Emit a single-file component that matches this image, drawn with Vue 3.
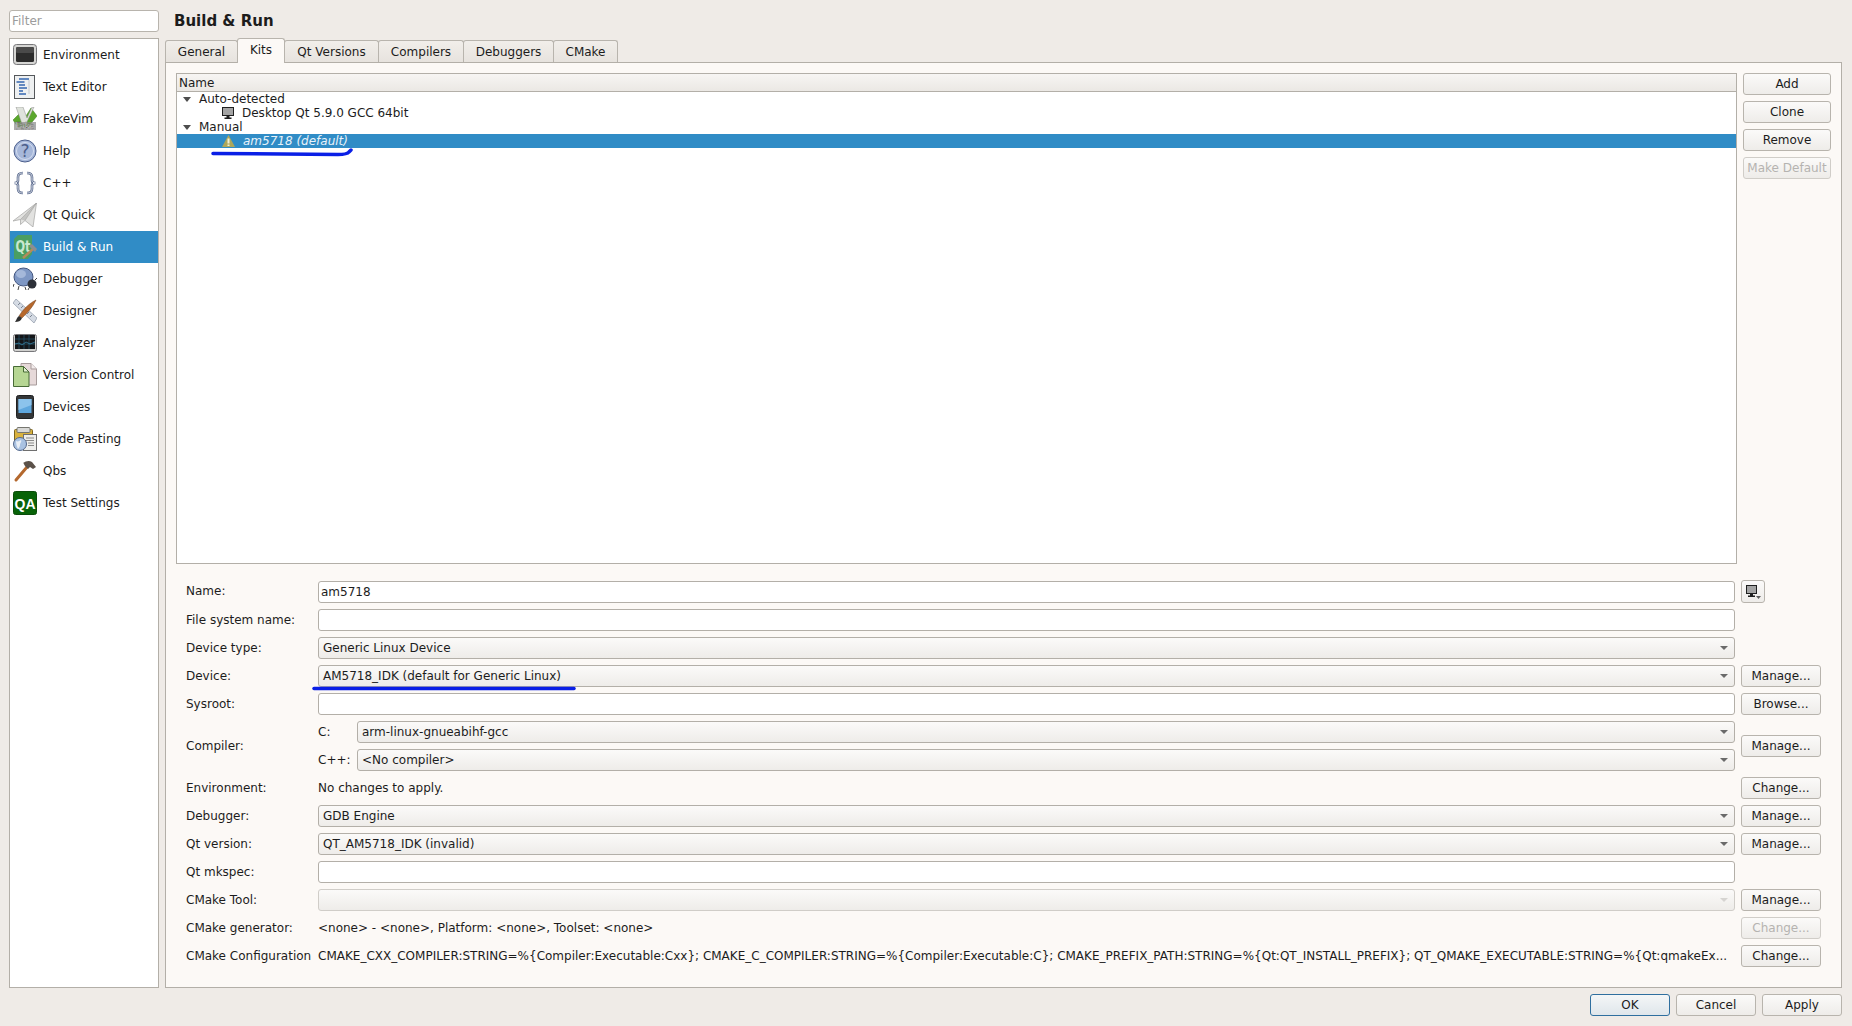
<script setup>
const navItems = [
  { id: 'env', label: 'Environment' },
  { id: 'text', label: 'Text Editor' },
  { id: 'vim', label: 'FakeVim' },
  { id: 'help', label: 'Help' },
  { id: 'cpp', label: 'C++' },
  { id: 'quick', label: 'Qt Quick' },
  { id: 'build', label: 'Build & Run', active: true },
  { id: 'debug', label: 'Debugger' },
  { id: 'design', label: 'Designer' },
  { id: 'analyze', label: 'Analyzer' },
  { id: 'vcs', label: 'Version Control' },
  { id: 'devices', label: 'Devices' },
  { id: 'paste', label: 'Code Pasting' },
  { id: 'qbs', label: 'Qbs' },
  { id: 'qa', label: 'Test Settings' }
]
const tabs = [
  { label: 'General', width: 73 },
  { label: 'Kits', width: 48 },
  { label: 'Qt Versions', width: 95 },
  { label: 'Compilers', width: 86 },
  { label: 'Debuggers', width: 91 },
  { label: 'CMake', width: 65 }
]
const sideButtons = [
  { label: 'Add' }, { label: 'Clone' }, { label: 'Remove' }, { label: 'Make Default', disabled: true }
]
const rows = [
  { label: 'File system name:', kind: 'input', value: '' },
  { label: 'Device type:', kind: 'combo', value: 'Generic Linux Device' },
  { label: 'Device:', kind: 'combo', value: 'AM5718_IDK (default for Generic Linux)', btn: 'Manage...' },
  { label: 'Sysroot:', kind: 'input', value: '', btn: 'Browse...' },
  { label: 'Compiler:', kind: 'compiler', btn: 'Manage...' },
  { label: 'Environment:', kind: 'text', value: 'No changes to apply.', btn: 'Change...' },
  { label: 'Debugger:', kind: 'combo', value: 'GDB Engine', btn: 'Manage...' },
  { label: 'Qt version:', kind: 'combo', value: 'QT_AM5718_IDK (invalid)', btn: 'Manage...' },
  { label: 'Qt mkspec:', kind: 'input', value: '' },
  { label: 'CMake Tool:', kind: 'combo', value: '', disabled: true, btn: 'Manage...' },
  { label: 'CMake generator:', kind: 'text', value: '<none> - <none>, Platform: <none>, Toolset: <none>', btn: 'Change...', btnDisabled: true },
  { label: 'CMake Configuration', kind: 'text', value: 'CMAKE_CXX_COMPILER:STRING=%{Compiler:Executable:Cxx}; CMAKE_C_COMPILER:STRING=%{Compiler:Executable:C}; CMAKE_PREFIX_PATH:STRING=%{Qt:QT_INSTALL_PREFIX}; QT_QMAKE_EXECUTABLE:STRING=%{Qt:qmakeEx...', btn: 'Change...' }
]
</script>

<template>
  <div class="app">
    <div class="top">
      <aside class="sidebar">
        <div class="filter">Filter</div>
        <ul class="nav">
          <li v-for="it in navItems" :key="it.id" class="nav-item" :class="{ active: it.active }">
            <svg class="nav-icon" viewBox="0 0 24 24" width="24" height="24">
              <template v-if="it.id === 'env'">
                <rect x="0.500" y="1.500" width="23" height="20" rx="3" fill="#d6d6d4" stroke="#77777a" />
                <rect x="3" y="4" width="18" height="15" rx="1.500" fill="#2c2c2c" />
                <rect x="3" y="4" width="18" height="6" rx="1.500" fill="#4a4a4a" />
              </template>
              <template v-else-if="it.id === 'text'">
                <rect x="1.500" y="0.500" width="20" height="23" fill="#eef0f1" stroke="#55585c" />
                <path d="M6 4h10M3.500 7h8M6 10h6M6 13h8M6 16h4M6 19h7" stroke="#3566b0" stroke-width="1.300" fill="none" />
                <path d="M16 5v14" stroke="#c5cad0" />
              </template>
              <template v-else-if="it.id === 'vim'">
                <path d="M0 13 8 5l5 4 5-8 6 8-9 11H5z" fill="#5aa72c" stroke="#3c7c1c" stroke-width="0.500" />
                <path d="M3 0h7l4 11 5-11h2l-8 17H9z" fill="#dfe3dc" stroke="#8c8c8c" stroke-width="0.500" />
                <rect x="1" y="15" width="22" height="8" fill="#8a8a8a" opacity="0.700" />
                <text x="12" y="22.300" font-size="8.500" text-anchor="middle" font-family="'DejaVu Sans', sans-serif" fill="#fff" stroke="#555" stroke-width="0.300">Fake</text>
              </template>
              <template v-else-if="it.id === 'help'">
                <circle cx="12" cy="12" r="11" fill="#a6b7d9" stroke="#4c5f8c" />
                <circle cx="12" cy="12" r="8.500" fill="none" stroke="#d5def0" />
                <text x="12" y="18" font-size="17" text-anchor="middle" font-family="'DejaVu Sans', sans-serif" fill="#4c5f8c">?</text>
              </template>
              <template v-else-if="it.id === 'cpp'">
                <path d="M10 2C6 2 5 3.500 5 6.500v3C5 11 3.500 12 1.500 12c2 0 3.500 1 3.500 2.500v3c0 3 1 4.500 5 4.500M14 2c4 0 5 1.500 5 4.500v3c0 1.500 1.500 2.500 3.500 2.500-2 0-3.500 1-3.500 2.500v3c0 3-1 4.500-5 4.500" fill="none" stroke="#56668a" stroke-width="2.600" />
                <path d="M10 2C6 2 5 3.500 5 6.500v3C5 11 3.500 12 1.500 12c2 0 3.500 1 3.500 2.500v3c0 3 1 4.500 5 4.500M14 2c4 0 5 1.500 5 4.500v3c0 1.500 1.500 2.500 3.500 2.500-2 0-3.500 1-3.500 2.500v3c0 3-1 4.500-5 4.500" fill="none" stroke="#e4e8f0" stroke-width="1" />
              </template>
              <template v-else-if="it.id === 'quick'">
                <path d="M0 18 23.500 0 20 24 12 17.500 7.500 21.500 7.500 16.500z" fill="#e2e2e0" stroke="#a4a4a2" stroke-width="0.700" />
                <path d="M7.500 16.500 23.500 0 12 17.500" fill="#c4c4c2" stroke="#9a9a98" stroke-width="0.500" />
              </template>
              <template v-else-if="it.id === 'build'">
                <path d="M5 0h14v19l-4 5H1V4z" fill="#4a9e62" />
                <text x="2.500" y="17" font-size="15" font-weight="bold" textLength="15" lengthAdjust="spacingAndGlyphs" font-family="'DejaVu Sans', sans-serif" fill="#c9e8cf">Qt</text>
                <path d="M10 23 20 14" stroke="#b58a5a" stroke-width="2.500" />
                <path d="M16 11l3-2 5 5-2 3z" fill="#8d8d90" />
              </template>
              <template v-else-if="it.id === 'debug'">
                <ellipse cx="10.500" cy="10" rx="9.500" ry="9" fill="#7e97c4" stroke="#43557e" />
                <ellipse cx="8" cy="7" rx="5" ry="4" fill="#a5b8da" />
                <circle cx="19" cy="17" r="4.500" fill="#2c3038" />
                <path d="M1 17l-1 3M6 19l-1 4M12 20l1 3M22 13l2-2M16 21l-1 2" stroke="#444" fill="none" />
              </template>
              <template v-else-if="it.id === 'design'">
                <path d="M3 0 24 19l-3 5L0 4z" fill="#d5dbe4" stroke="#8d97a6" stroke-width="0.700" />
                <path d="M5 6l2-2M8 9l2-2M11 12l2-2M14 15l2-2M17 18l2-2" stroke="#7b8492" />
                <path d="M23 1C17 4 11 9 6 17l3 2C14 14 20 8 23 1z" fill="#b7682c" stroke="#6e3c17" stroke-width="0.500" />
                <path d="M6 17c-2 1-2 3-4 6 3 0 6-1 7-4z" fill="#2e2e2e" />
              </template>
              <template v-else-if="it.id === 'analyze'">
                <rect x="0.500" y="3.500" width="23" height="17" rx="2" fill="#cfcfcd" stroke="#77777a" />
                <rect x="2" y="4" width="20" height="14" fill="#141619" />
                <path d="M6 4v14M11 4v14M16 4v14M2 8h20M2 13h20" stroke="#27566e" stroke-width="0.700" />
                <path d="M2 13l4-1 3 2 4-3 4 2 5-2" stroke="#3d8fb5" stroke-width="0.700" fill="none" />
              </template>
              <template v-else-if="it.id === 'vcs'">
                <path d="M8 0.500h10l5.500 5.500v16h-15.500z" fill="#e6d9d9" stroke="#a79b9b" />
                <path d="M18 0.500v5.500h5.500" fill="#f3ecec" stroke="#a79b9b" />
                <path d="M0.500 3.500h10l5.500 5.500v14.500h-15.500z" fill="#b6d693" stroke="#476a36" />
                <path d="M10.500 3.500v5.500h5.500z" fill="#e3f0d2" stroke="#476a36" />
              </template>
              <template v-else-if="it.id === 'devices'">
                <rect x="3.500" y="0.500" width="17" height="23" rx="2" fill="#343638" stroke="#1f2021" />
                <rect x="5.500" y="4" width="13" height="14" fill="#5fa7de" />
                <path d="M5.500 4h13v6L5.500 15z" fill="#8cc3ec" />
              </template>
              <template v-else-if="it.id === 'paste'">
                <rect x="1.500" y="2.500" width="18" height="18" rx="1" fill="#d9b23e" stroke="#7b6420" />
                <rect x="4" y="0.500" width="13" height="5" rx="1" fill="#d8d8d6" stroke="#76766f" />
                <rect x="10.500" y="7.500" width="13" height="16" fill="#eeeeec" stroke="#6f6f6f" />
                <path d="M13 11h8M13 13.500h8M15 16h6M15 18.500h6" stroke="#8a8a8a" />
                <circle cx="7" cy="17" r="6.500" fill="#a9c2e2" stroke="#54688c" />
                <path d="M3 14c2 1 3 0 5-1 1 2-1 3-1 5 0 1-1 3-2 4-1-2-2-5-2-8z" fill="#e8eef6" />
              </template>
              <template v-else-if="it.id === 'qbs'">
                <path d="M3 21 14 8" stroke="#b4682e" stroke-width="3" stroke-linecap="round" />
                <path d="M10 4c3-2 6-3 9-1l4 5-3 2-3-2-2 2-3-3c-1-1-1-3-2-3z" fill="#5b5149" />
              </template>
              <template v-else-if="it.id === 'qa'">
                <rect x="0.500" y="0.500" width="23" height="23" rx="2" fill="#086308" stroke="#0a4d0a" />
                <text x="12" y="17.500" font-size="15" font-weight="bold" text-anchor="middle" textLength="21" lengthAdjust="spacingAndGlyphs" font-family="'Liberation Sans', sans-serif" fill="#fff">QA</text>
              </template>
            </svg>
            <span>{{ it.label }}</span>
          </li>
        </ul>
      </aside>

      <main class="main">
        <h1 class="title">Build &amp; Run</h1>
        <div class="tabbar">
          <div v-for="t in tabs" :key="t.label" class="tab" :class="{ selected: t.label === 'Kits' }" :style="{ width: t.width + 'px' }">{{ t.label }}</div>
        </div>
        <section class="pane">
          <div class="kits">
            <div class="tree">
              <div class="tree-head">Name</div>
              <div class="tree-row">
                <i class="arrow"></i><span>Auto-detected</span>
              </div>
              <div class="tree-row child">
                <svg class="row-icon" viewBox="0 0 12 12" width="12" height="12">
                  <rect x="0.500" y="0.500" width="11" height="8" fill="#a4a4a4" stroke="#1f1f1f" />
                  <path d="M4.500 9h3v1.500h2V12h-7v-1.500h2z" fill="#1f1f1f" />
                </svg>
                <span>Desktop Qt 5.9.0 GCC 64bit</span>
              </div>
              <div class="tree-row">
                <i class="arrow"></i><span>Manual</span>
              </div>
              <div class="tree-row child selected">
                <svg class="row-icon" viewBox="0 0 13 12" width="13" height="12">
                  <path d="M6.500 0 13 12H0z" fill="#aea75a" />
                  <path d="M5.500 3.500h2v5h-2zM5.500 9.500h2V11h-2z" fill="#f2f0d6" />
                </svg>
                <em>am5718 (default)</em>
              </div>
            </div>
            <div class="side-buttons">
              <button v-for="b in sideButtons" :key="b.label" class="btn side" :disabled="b.disabled">{{ b.label }}</button>
            </div>
          </div>

          <div class="form">
            <label class="lbl name-row">Name:</label>
            <div class="field input name-row">am5718</div>
            <button class="btn mon">
              <svg viewBox="0 0 16 14" width="16" height="14">
                <rect x="1.500" y="0.500" width="10" height="8" fill="#a4a4a4" stroke="#1f1f1f" />
                <path d="M5 9h3v1.500h2V12H3v-1.500h2z" fill="#1f1f1f" />
                <path d="M11 11h5l-2.500 3z" fill="#5d5d5d" />
              </svg>
            </button>

            <template v-for="r in rows" :key="r.label">
              <label class="lbl">{{ r.label }}</label>
              <div v-if="r.kind === 'input'" class="field input">{{ r.value }}</div>
              <div v-else-if="r.kind === 'combo'" class="field combo" :class="{ disabled: r.disabled }">
                <span>{{ r.value }}</span><i class="combo-arrow"></i>
              </div>
              <div v-else-if="r.kind === 'text'" class="field plain">{{ r.value }}</div>
              <div v-else class="compiler">
                <span class="sub">C:</span>
                <div class="field combo"><span>arm-linux-gnueabihf-gcc</span><i class="combo-arrow"></i></div>
                <span class="sub">C++:</span>
                <div class="field combo"><span>&lt;No compiler&gt;</span><i class="combo-arrow"></i></div>
              </div>
              <button v-if="r.btn" class="btn row-btn" :disabled="r.btnDisabled">{{ r.btn }}</button>
              <div v-else></div>
            </template>
          </div>
        </section>
      </main>
    </div>

    <footer class="footer">
      <button class="btn foot default">OK</button>
      <button class="btn foot">Cancel</button>
      <button class="btn foot">Apply</button>
    </footer>

    <svg class="scribble" viewBox="0 0 1852 1026" width="1852" height="1026">
      <path d="M213 153.500L338 154.500Q347 154.500 349 152L351 150" />
      <path d="M314 688.500H574" />
    </svg>
  </div>
</template>

<style>
html, body { margin: 0; background: #efebe7; }
</style>

<style scoped>
.app {
  position: relative;
  width: 1852px;
  height: 1026px;
  box-sizing: border-box;
  padding: 10px 10px 10px 9px;
  background: #efebe7;
  color: #1c1c1c;
  font: 12px/16px "DejaVu Sans", sans-serif;
  overflow: hidden;
  display: flex;
  flex-direction: column;
  gap: 6px;
}
.top { display: flex; gap: 6px; height: 978px; }

.sidebar { width: 150px; display: flex; flex-direction: column; gap: 6px; }
.filter {
  height: 22px;
  box-sizing: border-box;
  padding: 2px 2px;
  background: #fff;
  border: 1px solid #b8b4ad;
  border-radius: 3px;
  color: #9c9c9c;
}
.nav {
  flex: 1;
  margin: 0;
  padding: 0;
  list-style: none;
  background: #fff;
  border: 1px solid #b3afa8;
}
.nav-item { height: 32px; display: flex; align-items: center; gap: 6px; padding-left: 3px; }
.nav-item.active { background: #308cc6; color: #fff; }
.nav-icon { flex: none; }

.main { flex: 1; display: flex; flex-direction: column; min-width: 0; }
.title {
  margin: 0 0 0 9px;
  height: 28px;
  font-size: 15px;
  font-weight: bold;
  line-height: 22px;
}
.tabbar { display: flex; height: 24px; align-items: flex-end; position: relative; z-index: 1; }
.tab {
  box-sizing: border-box;
  height: 22px;
  padding-top: 3px;
  text-align: center;
  border: 1px solid #b8b4ad;
  border-bottom: 0;
  margin-right: -1px;
  border-radius: 3px 3px 0 0;
  background: linear-gradient(#f1eeea, #e7e3de);
}
.tab.selected {
  height: 25px;
  margin-bottom: -1px;
  background: #fcf9f6;
  position: relative;
  z-index: 1;
}
.pane {
  flex: 1;
  box-sizing: border-box;
  padding: 10px 10px 0;
  background: #fcf9f6;
  border: 1px solid #b3afa8;
}

.kits { display: flex; gap: 6px; height: 491px; }
.tree { flex: 1; background: #fff; border: 1px solid #b3afa8; }
.tree-head {
  height: 18px;
  box-sizing: border-box;
  padding: 1px 2px;
  line-height: 16px;
  background: linear-gradient(#f7f5f3, #ebe8e4);
  border-bottom: 1px solid #b3afa8;
}
.tree-row {
  height: 14px;
  line-height: 14px;
  display: flex;
  align-items: center;
  padding-left: 6px;
}
.tree-row .arrow {
  width: 0;
  height: 0;
  margin-right: 8px;
  border-left: 4.500px solid transparent;
  border-right: 4.500px solid transparent;
  border-top: 5px solid #4d4d4d;
}
.tree-row.child { padding-left: 45px; gap: 8px; }
.tree-row.selected { background: #308cc6; color: #e8f2f9; }
.row-icon { flex: none; }
.side-buttons { width: 88px; display: flex; flex-direction: column; gap: 6px; }

.btn {
  box-sizing: border-box;
  height: 22px;
  padding: 0;
  font: 12px/16px "DejaVu Sans", sans-serif;
  color: #1c1c1c;
  background: linear-gradient(#fbfaf9, #eeece9);
  border: 1px solid #b8b4ad;
  border-radius: 3px;
}
.btn:disabled { color: #b5b3b0; border-color: #d0cdc8; }
.btn.foot { width: 80px; }
.btn.default { border-color: #2f6f9f; background: linear-gradient(#f4f6f7, #dfe6eb); }

.form {
  margin: 16px 10px 0;
  display: grid;
  grid-template-columns: 132px 1fr 86px;
  row-gap: 6px;
  align-items: center;
}
.lbl { line-height: 22px; white-space: nowrap; }
.name-row { height: 23px; }
.field {
  box-sizing: border-box;
  height: 22px;
  line-height: 20px;
  min-width: 0;
  border: 1px solid #b3afa8;
  border-radius: 3px;
  white-space: nowrap;
  overflow: hidden;
}
.input { background: #fff; padding: 0 2px; }
.combo {
  display: flex;
  align-items: center;
  justify-content: space-between;
  padding: 0 6px 0 4px;
  background: linear-gradient(#fbfaf9, #eeece9);
}
.combo.disabled { border-color: #d0cdc8; }
.combo.disabled .combo-arrow { border-top-color: #d6d4d1; }
.combo-arrow {
  flex: none;
  width: 0;
  height: 0;
  border-left: 4px solid transparent;
  border-right: 4px solid transparent;
  border-top: 4px solid #6a6a6a;
}
.plain { border: 0; line-height: 22px; }
.compiler {
  display: grid;
  grid-template-columns: 39px 1fr;
  row-gap: 6px;
  align-items: center;
}
.row-btn { justify-self: end; width: 80px; }
.mon {
  justify-self: start;
  margin-left: 6px;
  width: 24px;
  height: 23px;
  display: flex;
  align-items: center;
  justify-content: center;
}

.footer { display: flex; justify-content: flex-end; gap: 6px; height: 22px; }

.scribble { position: absolute; left: 0; top: 0; pointer-events: none; }
.scribble path { fill: none; stroke: #0a1fe6; stroke-width: 3.500; stroke-linecap: round; }
</style>
